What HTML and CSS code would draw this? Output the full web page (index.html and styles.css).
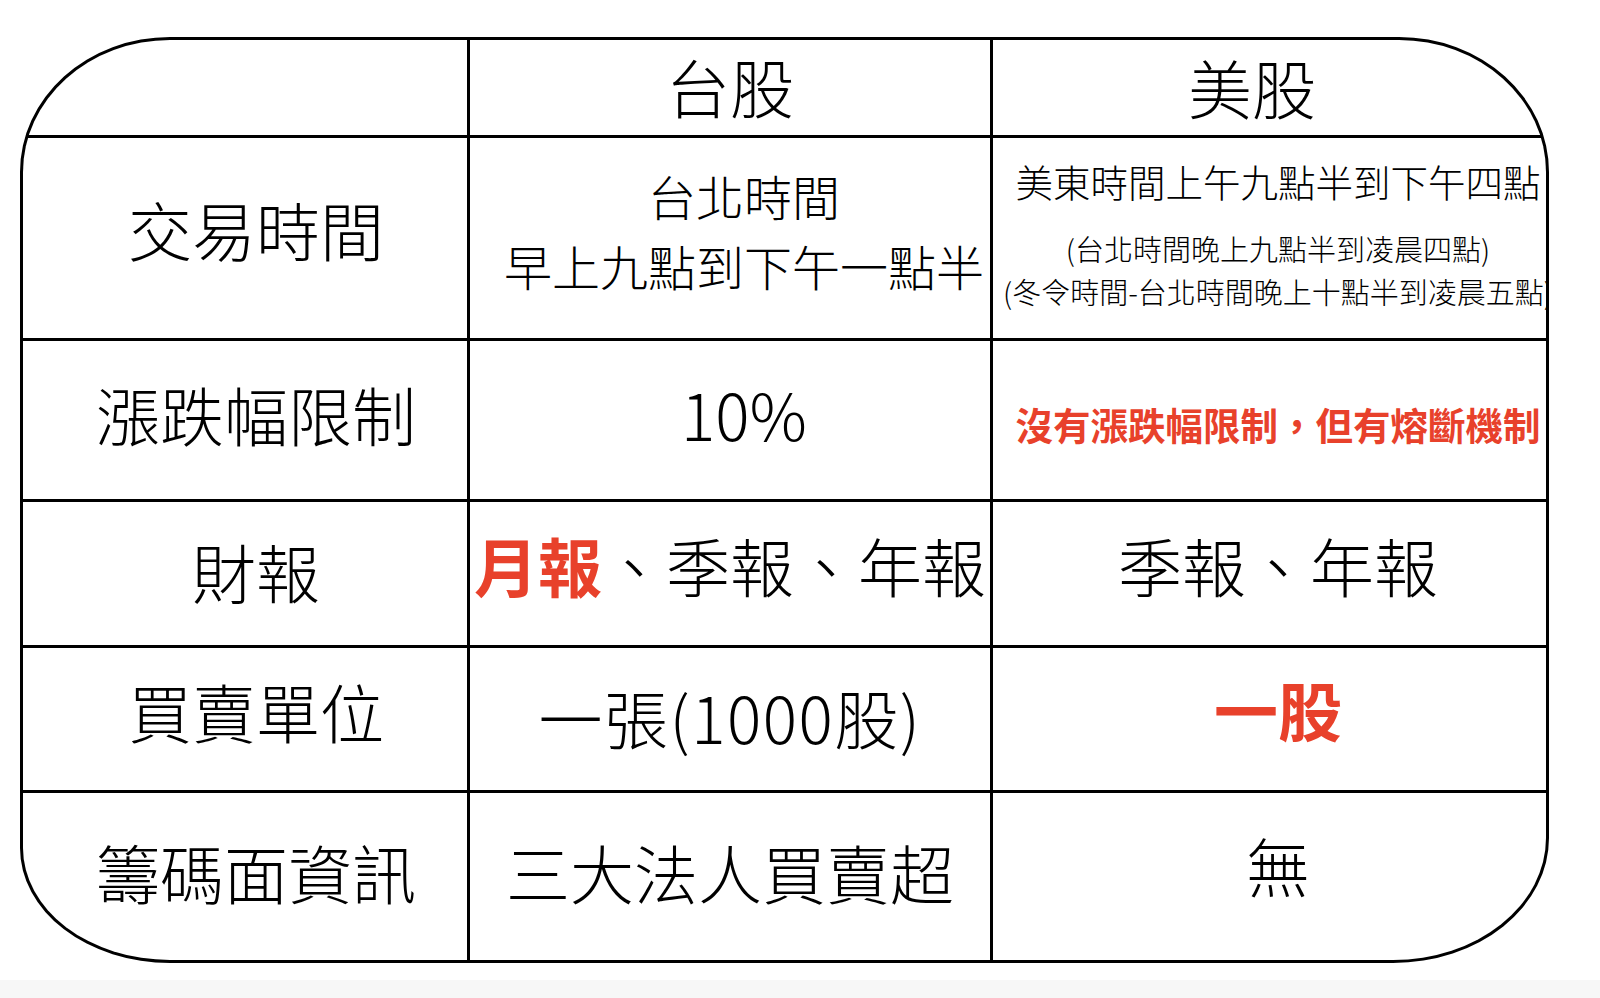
FILE: index.html
```html
<!DOCTYPE html>
<html lang="zh-Hant">
<head>
<meta charset="utf-8">
<title>台股 vs 美股</title>
<link rel="stylesheet" href="styles.css">
</head>
<body>
<div class="board">
  <div class="cell c0 head"></div>
  <div class="cell c1 head big">台股</div>
  <div class="cell c2 head big us-head">美股</div>

  <div class="cell c0 big r1">交易時間</div>
  <div class="cell c1 tw-hours">
    <div class="tw-line">台北時間</div>
    <div class="tw-line">早上九點到下午一點半</div>
  </div>
  <div class="cell c2 us-hours">
    <div class="us-l1">美東時間上午九點半到下午四點</div>
    <div class="us-l2 first">(台北時間晚上九點半到凌晨四點)</div>
    <div class="us-l2">(冬令時間-台北時間晚上十點半到凌晨五點)</div>
  </div>

  <div class="cell c0 big r2">漲跌幅限制</div>
  <div class="cell c1 big r2-pct shift">10%</div>
  <div class="cell c2 us-limit"><span class="red bold">沒有漲跌幅限制，但有熔斷機制</span></div>

  <div class="cell c0 big r3">財報</div>
  <div class="cell c1 big r3-data"><span><span class="red bold">月報</span>、季報、年報</span></div>
  <div class="cell c2 big r3-data">季報、年報</div>

  <div class="cell c0 big r4">買賣單位</div>
  <div class="cell c1 big r4-tw">一張(1000股)</div>
  <div class="cell c2 big r4-us"><span class="red bold">一股</span></div>

  <div class="cell c0 big r5">籌碼面資訊</div>
  <div class="cell c1 big r5">三大法人買賣超</div>
  <div class="cell c2 big r5-us">無</div>
</div>
<div class="footer"></div>
</body>
</html>
```

FILE: styles.css
```css
html, body {
  margin: 0;
  padding: 0;
  background: #ffffff;
  overflow: hidden;
}

body {
  width: 1600px;
  height: 998px;
  font-family: "Noto Sans CJK TC", "Noto Sans", sans-serif;
  font-weight: 300;
  color: #000000;
}

.board {
  margin: 37px 0 0 20px;
  width: 1529px;
  height: 926px;
  box-sizing: border-box;
  border: 3px solid #000000;
  border-radius: 150px 150px 156px 150px / 135px 135px 125px 115px;
  overflow: hidden;
  background: #000000;
  display: grid;
  grid-template-columns: 444px 520px 553px;
  grid-template-rows: 95px 200px 158px 143px 142px 167px;
  gap: 3px;
}

.cell {
  background: #ffffff;
  min-width: 0;
  box-sizing: border-box;
  display: flex;
  flex-direction: column;
  align-items: center;
  justify-content: center;
  white-space: nowrap;
}

.big {
  font-size: 64px;
  line-height: 1.2;
}

.red {
  color: #e8412b;
}

.bold {
  font-weight: 700;
}

.c0 {
  padding-left: 22px;
}

.c2 {
  padding-left: 17px;
}

.head {
  padding-bottom: 5px;
}

.us-head {
  padding-left: 0;
  padding-right: 35px;
  padding-bottom: 3px;
}

.r1 { padding-bottom: 19px; }
.r2 { padding-bottom: 13px; }
.r3 { padding-bottom: 6px; }
.r4 { padding-bottom: 17px; }
.r5 { padding-bottom: 10px; }

.shift {
  padding-left: 28px;
}

.r2-pct {
  padding-bottom: 14px;
}

.r3-data {
  padding-bottom: 18px;
}

.r4-tw {
  padding-bottom: 6px;
  letter-spacing: 1.5px;
}

.r4-us {
  padding-bottom: 21px;
}

.r5-us {
  padding-bottom: 24px;
}

.tw-hours {
  justify-content: flex-start;
  padding-top: 22px;
  padding-left: 28px;
}

.tw-line {
  font-size: 48px;
  line-height: 70px;
}

.us-hours {
  justify-content: flex-start;
  padding-top: 18px;
}

.us-l1 {
  font-size: 37.5px;
  line-height: 50px;
}

.us-l2 {
  font-size: 29px;
  line-height: 43px;
}

.us-l2.first {
  margin-top: 21px;
}

.us-limit {
  font-size: 37.5px;
  line-height: 1.2;
  padding-top: 6px;
}

.footer {
  margin-top: 17px;
  height: 18px;
  background: #f7f7f7;
}
```
